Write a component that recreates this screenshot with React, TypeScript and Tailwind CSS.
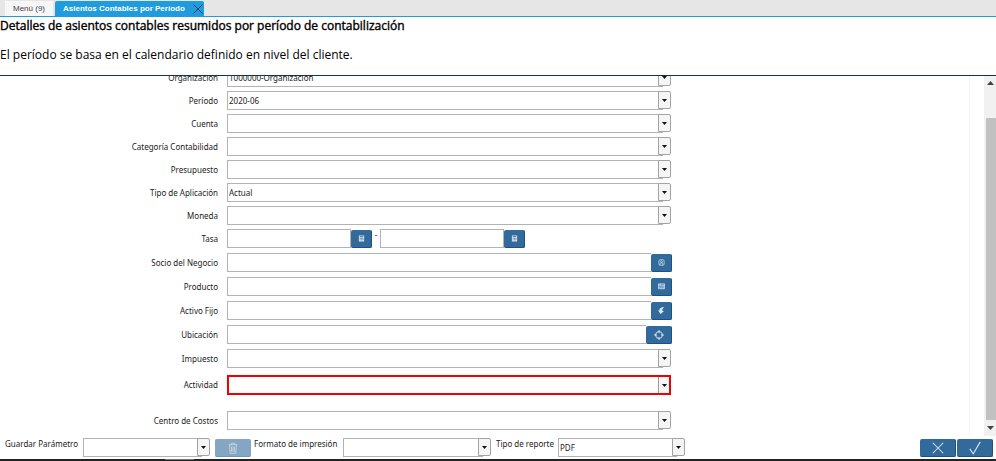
import React, { useId } from "react";

type IconName = "calc" | "person" | "product" | "asset" | "target" | "trash" | "close" | "check";

function Icon({ name, className }: { name: IconName; className: string }) {
  const line = { fill: "none", stroke: "currentColor" };
  return (
    <svg viewBox="0 0 16 16" className={className} aria-hidden="true">
      {name === "calc" && (
        <path
          fill="currentColor"
          fillRule="evenodd"
          d="M2 1h12v14H2zM4 3v2h8V3zM4 7v1.500h2V7zM7.200 7v1.500h2V7zM4 10.500V12h2v-1.500zM7.200 10.500V12h2v-1.500zM10.500 7v5H12V7z"
        />
      )}
      {name === "person" && (
        <g {...line} strokeWidth="1.500">
          <rect x="2" y="1.500" width="12" height="13" rx="3" />
          <circle cx="8" cy="6" r="2.200" />
          <path d="M5 14v-2.500a3 3 0 0 1 6 0V14" />
        </g>
      )}
      {name === "product" && (
        <g {...line} strokeWidth="1.800">
          <path d="M1 2h14v11H1zM1 5h14M5 2v6l-2 3M9 7v4M12 5v8M5 11h3" />
        </g>
      )}
      {name === "asset" && (
        <path fill="currentColor" d="M14 0C7 0 3 3 3 8H0l6 8 8-7h-4c-1-3 1-6 4-9z" />
      )}
      {name === "target" && (
        <g {...line} strokeWidth="1.500">
          <circle cx="8" cy="8" r="5.500" />
          <path d="M8 0v5M8 11v5M0 8h5M11 8h5" />
        </g>
      )}
      {name === "trash" && (
        <g {...line} strokeWidth="1.200">
          <path d="M2 3.500h12M6 3V1.500h4V3M3.500 4l.7 11h7.600l.7-11M6 6v7M8 6v7M10 6v7" />
        </g>
      )}
      {name === "close" && <path {...line} strokeWidth="1.200" d="M2 2l12 12M14 2L2 14" />}
      {name === "check" && <path {...line} strokeWidth="1.200" d="M2 9l4 5.500L14 1" />}
    </svg>
  );
}

function Combo({ id, value = "", required = false }: { id: string; value?: string; required?: boolean }) {
  return (
    <div className={`grid w-full ${required ? "h-5 border-2 border-[#f00000]" : "h-[19px]"}`}>
      <select
        id={id}
        defaultValue={value}
        className={`col-start-1 row-start-1 w-[calc(100%-8px)] appearance-none rounded-none bg-white pl-px text-[8px] text-[#222] outline-none ${
          required ? "" : "border border-r-0 border-[#b3b3b3]"
        }`}
      >
        <option value={value}>{value}</option>
      </select>
      <span
        className={`pointer-events-none col-start-1 row-start-1 flex items-center justify-center justify-self-end bg-[#f5f5f5] ${
          required ? "w-[11px] border-l border-[#999]" : "mb-px w-[13px] rounded-r-[2px] border border-[#a3a3a3]"
        }`}
      >
        <svg viewBox="0 0 5 3" className="h-[3px] w-[5px]" aria-hidden="true">
          <path fill="#111" d="M0 0h5L2.500 3z" />
        </svg>
      </span>
    </div>
  );
}

const BLUE =
  "flex shrink-0 items-center justify-center rounded-[2px] border-r border-b border-[#1d527e] bg-[#326b9b] text-[#dbe8f3]";

function Lookup({ id, icon, label, wide = false }: { id: string; icon: IconName; label: string; wide?: boolean }) {
  return (
    <div className="-mr-px flex flex-1 items-start">
      <input
        id={id}
        className="h-[19px] min-w-0 flex-1 border border-r-0 border-[#b3b3b3] bg-white px-0.5 text-[8px] outline-none"
      />
      <button type="button" aria-label={label} className={`${BLUE} mt-px h-[18px] ${wide ? "w-[26px]" : "w-[21px]"}`}>
        <Icon name={icon} className={wide ? "size-[10px]" : "size-[7px]"} />
      </button>
    </div>
  );
}

function AmountBox({ id, label }: { id?: string; label: string }) {
  return (
    <div className="flex w-[145px] items-start">
      <input
        id={id}
        aria-label={label}
        className="h-[19px] min-w-0 flex-1 border border-[#b3b3b3] bg-white px-0.5 text-[8px] outline-none"
      />
      <button type="button" aria-label={`Calculadora ${label}`} className={`${BLUE} mt-px h-[18px] w-[21px]`}>
        <Icon name="calc" className="size-[7px]" />
      </button>
    </div>
  );
}

function Row({
  label,
  className = "h-[23px]",
  children,
}: {
  label: string;
  className?: string;
  children: (id: string) => React.ReactNode;
}) {
  const id = useId();
  return (
    <div className={`grid shrink-0 grid-cols-[218fr_444fr_289fr] items-start gap-x-[9px] ${className}`}>
      <label htmlFor={id} className="text-right leading-[19px] whitespace-nowrap">
        {label}
      </label>
      <div className="flex items-start">{children(id)}</div>
    </div>
  );
}

export default function App() {
  return (
    <div className="flex h-screen flex-col overflow-hidden bg-white font-['Noto_Sans',sans-serif] text-[8px] text-[#222]">
      <nav className="flex h-[17px] shrink-0 items-stretch gap-0.5 border-b border-[#1f9bde] bg-[#e6e6e6] pt-px pl-[5px] font-['Liberation_Sans',Arial,sans-serif] text-[8px]">
        <button type="button" className="w-12 bg-[#f7f7f7] text-[#444]">
          Menú (9)
        </button>
        <div className="flex w-[149px] items-center justify-between rounded-t-[2px] bg-[#1f9bde] pl-2">
          <button type="button" className="font-bold whitespace-nowrap text-white">
            Asientos Contables por Período
          </button>
          <button type="button" aria-label="Cerrar pestaña" className="text-[#123b5c]">
            <Icon name="close" className="size-3" />
          </button>
        </div>
      </nav>

      <header className="h-[59px] shrink-0 border-b border-[#0d3559] font-['Open_Sans','Noto_Sans',sans-serif] text-[12px] text-black">
        <h1 className="leading-[17px] font-normal [-webkit-text-stroke:0.4px_black]">
          Detalles de asientos contables resumidos por período de contabilización
        </h1>
        <p className="mt-3 leading-[17px]">El período se basa en el calendario definido en nivel del cliente.</p>
      </header>

      <main className="flex min-h-0 flex-1">
        <form className="-mt-2 flex min-w-0 flex-1 flex-col overflow-hidden border-r border-[#f3f3f3] [clip-path:inset(8px_0_0_0)]">
          <Row label="Organización">{(id) => <Combo id={id} value="1000000-Organización" />}</Row>
          <Row label="Período">{(id) => <Combo id={id} value="2020-06" />}</Row>
          <Row label="Cuenta">{(id) => <Combo id={id} />}</Row>
          <Row label="Categoría Contabilidad">{(id) => <Combo id={id} />}</Row>
          <Row label="Presupuesto">{(id) => <Combo id={id} />}</Row>
          <Row label="Tipo de Aplicación">{(id) => <Combo id={id} value="Actual" />}</Row>
          <Row label="Moneda">{(id) => <Combo id={id} />}</Row>
          <Row label="Tasa" className="h-6">
            {(id) => (
              <>
                <AmountBox id={id} label="Tasa desde" />
                <span className="w-2 text-center leading-3">-</span>
                <AmountBox label="Tasa hasta" />
              </>
            )}
          </Row>
          <Row label="Socio del Negocio" className="h-6">
            {(id) => <Lookup id={id} icon="person" label="Buscar socio" />}
          </Row>
          <Row label="Producto" className="h-6">
            {(id) => <Lookup id={id} icon="product" label="Buscar producto" />}
          </Row>
          <Row label="Activo Fijo" className="h-6">
            {(id) => <Lookup id={id} icon="asset" label="Buscar activo" />}
          </Row>
          <Row label="Ubicación" className="h-6">
            {(id) => <Lookup id={id} icon="target" label="Buscar ubicación" wide />}
          </Row>
          <Row label="Impuesto" className="h-[26px]">
            {(id) => <Combo id={id} />}
          </Row>
          <Row label="Actividad" className="h-9">
            {(id) => <Combo id={id} required />}
          </Row>
          <Row label="Centro de Costos">{(id) => <Combo id={id} />}</Row>
        </form>
        <div className="ml-[14px] flex w-3 shrink-0 flex-col items-end bg-[#f1f1f1] text-[#444]">
          <svg viewBox="0 0 12 12" className="mt-0.5 size-3 shrink-0" aria-hidden="true">
            <path fill="currentColor" d="M3 7h7L6.500 3z" />
          </svg>
          <div className="mt-7 w-[10px] flex-1 bg-[#c1c1c1]" />
          <svg viewBox="0 0 12 16" className="h-4 w-3 shrink-0" aria-hidden="true">
            <path fill="currentColor" d="M3 6h7l-3.500 4z" />
          </svg>
        </div>
      </main>

      <footer className="flex h-[23px] shrink-0 items-start pt-0.5 pr-[3px] pl-[5px]">
        <label htmlFor="saved" className="w-[78px] leading-3 whitespace-nowrap">
          Guardar Parámetro
        </label>
        <div className="w-[127px]">
          <Combo id="saved" />
        </div>
        <button
          type="button"
          disabled
          aria-label="Eliminar"
          className="mt-px ml-[5px] flex h-[18px] w-9 items-center justify-center rounded-[2px] border-b border-[#6f96b8] bg-[#84a6c3] text-[#c3d4e2]"
        >
          <Icon name="trash" className="size-3" />
        </button>
        <label htmlFor="format" className="ml-[3px] w-[89px] leading-3 whitespace-nowrap">
          Formato de impresión
        </label>
        <div className="w-[148px]">
          <Combo id="format" />
        </div>
        <label htmlFor="report" className="ml-[5px] w-[62px] leading-3 whitespace-nowrap">
          Tipo de reporte
        </label>
        <div className="w-[127px]">
          <Combo id="report" value="PDF" />
        </div>
        <div className="mt-px ml-auto flex gap-px">
          <button type="button" aria-label="Cancelar" className={`${BLUE} h-[18px] w-9`}>
            <Icon name="close" className="size-[14px]" />
          </button>
          <button type="button" aria-label="Aceptar" className={`${BLUE} h-[18px] w-9`}>
            <Icon name="check" className="size-[14px]" />
          </button>
        </div>
      </footer>
      <div className="h-0.5 shrink-0 bg-[#222] pl-[165px]">
        <div className="h-px w-[29px] bg-[#777]" />
      </div>
    </div>
  );
}
